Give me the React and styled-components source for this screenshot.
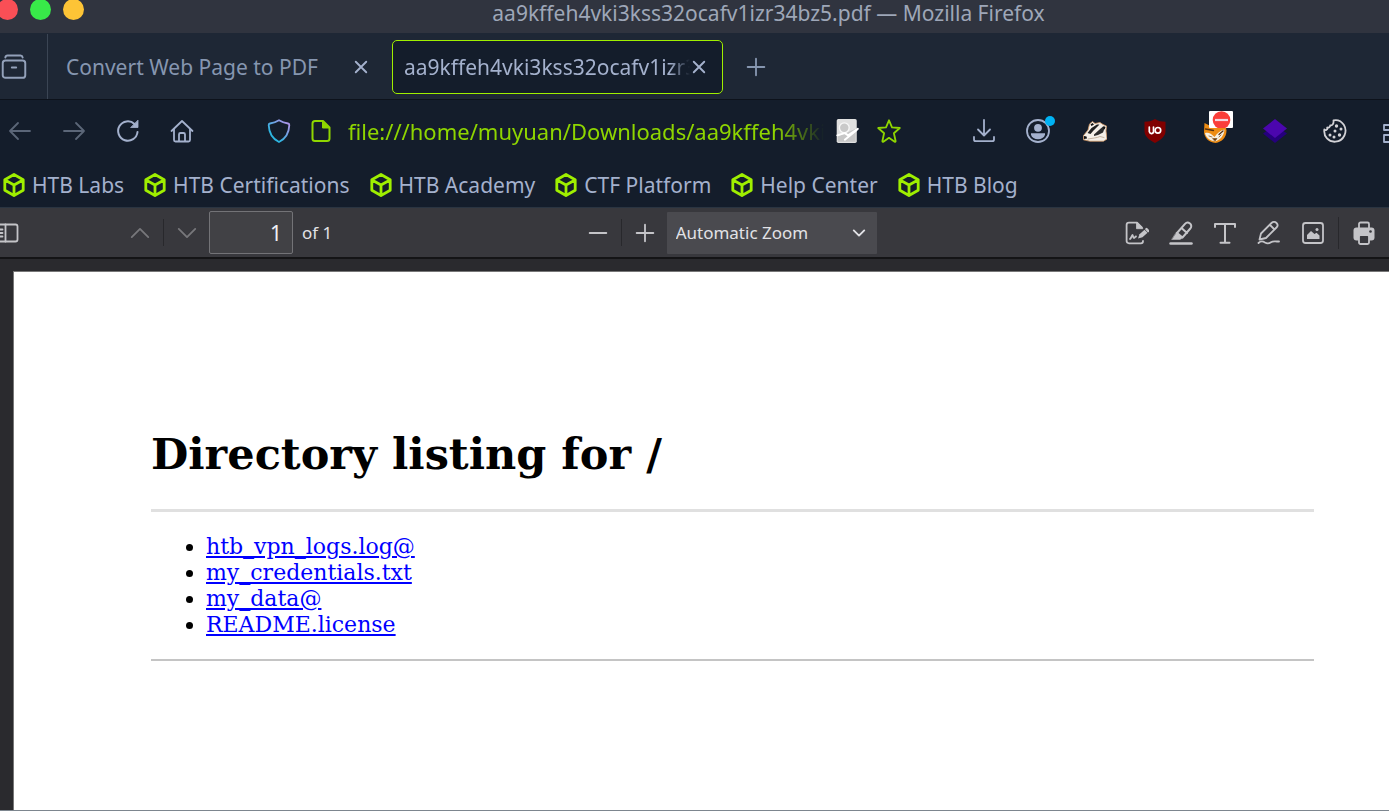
import React, { useState } from 'react';
import styled, { createGlobalStyle } from 'styled-components';

const bookmarks = ['HTB Labs', 'HTB Certifications', 'HTB Academy', 'CTF Platform', 'Help Center', 'HTB Blog'];
const files = ['htb_vpn_logs.log@', 'my_credentials.txt', 'my_data@', 'README.license'];
const fileName = 'aa9kffeh4vki3kss32ocafv1izr34bz5.pdf';

const Svg = ({ size = 24, children, ...rest }) => (
  <svg
    width={size}
    height={size}
    viewBox="0 0 24 24"
    fill="none"
    stroke="currentColor"
    strokeWidth="1.8"
    strokeLinecap="round"
    strokeLinejoin="round"
    aria-hidden="true"
    {...rest}
  >
    {children}
  </svg>
);

const TabsIcon = () => (
  <Svg size={26}>
    <path d="M4 3.2C4.3 1.7 5 1.4 6 1.4h12c1 0 1.700.3 2 1.800" />
    <rect x="1.600" y="6" width="20.800" height="16" rx="2.500" />
    <path d="M10 12.500h4" />
  </Svg>
);

const CloseIcon = () => (
  <Svg size={14}>
    <path d="M3 3l18 18M21 3L3 21" strokeWidth="3.200" />
  </Svg>
);

const PlusIcon = ({ size = 20 }) => (
  <Svg size={size} strokeWidth="2.200">
    <path d="M12 2v20M2 12h20" />
  </Svg>
);

const MinusIcon = () => (
  <Svg size={20} strokeWidth="2.200">
    <path d="M2 12h20" />
  </Svg>
);

const BackIcon = () => (
  <Svg>
    <path d="M22 12H2M10 4l-8 8 8 8" />
  </Svg>
);

const ForwardIcon = () => (
  <Svg>
    <path d="M2 12h20M14 4l8 8-8 8" />
  </Svg>
);

const ReloadIcon = () => (
  <Svg strokeWidth="2">
    <path d="M21.500 13A9.700 9.700 0 1 1 18.500 5" />
    <path d="M22 1.500V8.500H15z" fill="currentColor" strokeWidth="0.800" />
  </Svg>
);

const HomeIcon = () => (
  <Svg>
    <path d="M1.500 12L12 2l10.500 10" />
    <path d="M4 10.500V21c0 1 .6 1.500 1.500 1.500h13c.9 0 1.500-.5 1.500-1.500V10.500" />
    <path d="M9 22v-6.500c0-1 .6-1.500 1.500-1.500h3c.9 0 1.500.5 1.500 1.500V22" />
  </Svg>
);

const ShieldIcon = () => (
  <Svg stroke="url(#shield)">
    <defs>
      <linearGradient id="shield" x1="2" y1="22" x2="22" y2="2" gradientUnits="userSpaceOnUse">
        <stop offset="0.25" stopColor="#2cb5e0" />
        <stop offset="0.9" stopColor="#a994e8" />
      </linearGradient>
    </defs>
    <path d="M12 1.200c3 1.800 6 2.800 9 3.300 1 .2 1.300.7 1.300 1.600C22 14 19 19.500 12 23 5 19.500 2 14 1.700 6.100c0-.9.4-1.400 1.300-1.600 3-.5 6-1.500 9-3.300z" />
  </Svg>
);

const DocIcon = () => (
  <Svg>
    <path d="M14 2H6C4.500 2 3.500 3 3.500 4.500v15C3.500 21 4.500 22 6 22h12c1.500 0 2.500-1 2.500-2.500V8.500z" strokeWidth="2" />
    <path d="M13.500 2v7h7z" fill="currentColor" strokeWidth="1" />
  </Svg>
);

const TranslateIcon = () => (
  <Svg size={26} stroke="none">
    <rect x="2.500" y="1" width="18.500" height="22" rx="1.500" fill="#e0e0e0" />
    <path d="M3.500 17L20 10V22H3.500z" fill="#c7c7c7" />
    <circle cx="9.500" cy="9" r="4.500" fill="#c9c9c9" stroke="#f7f7f7" strokeWidth="1.200" />
    <path d="M3 16l7-2 3 2 9-6M10 20l11-9" stroke="#ffffff" strokeWidth="1.800" />
  </Svg>
);

const StarIcon = () => (
  <Svg>
    <path d="M12 1.300l3 7 7.800.7-5.900 5.200 1.700 7.800c.1.700-.4 1-1 .7L12 18.800l-5.600 3.900c-.6.300-1.100 0-1-.7l1.700-7.800L1.200 9l7.800-.7z" />
  </Svg>
);

const DownloadIcon = () => (
  <Svg>
    <path d="M12 1v15M6 10.500l6 6 6-6M2 18v2.500c0 1 .7 1.700 1.700 1.700h16.600c1 0 1.700-.7 1.700-1.700V18" />
  </Svg>
);

const AccountIcon = () => (
  <Svg>
    <circle cx="12" cy="12" r="11" />
    <circle cx="12" cy="8.800" r="3.900" fill="currentColor" stroke="none" />
    <path d="M5 14.200h14v1.500c-.8 2.800-3.600 4.500-7 4.500s-6.200-1.700-7-4.500z" fill="currentColor" stroke="none" />
  </Svg>
);

const BadgerIcon = () => (
  <Svg strokeWidth="0.800">
    <path d="M.5 20.500v-4L5 11 6.500 5l3-2.500L12 4.500l5-1L20 5.500l3.500 1.500L23 12l1 8-3.500 2.200H7z" fill="#f4efe8" stroke="#cf9765" />
    <path d="M4.500 14l4-5 5.500-3.500 2.500 0-6 6-3 3.500z" fill="#202020" stroke="none" />
    <path d="M11 15.500l5-4.500 4-3.500 1.500 2-1.500 4-5 2.500-4 1z" fill="#2b2b2b" stroke="none" />
    <path d="M7.500 5.500L9.500 4 11 5.500 8.500 7zM20.500 7l2 1-1 2.500-1.500-1.500z" fill="#111111" stroke="none" />
    <path d="M1 17l2.500.5.5 2-3 .5z" fill="#111111" stroke="none" />
    <path d="M5 20c4-.8 9-1 12-2.500l4 1" stroke="#b9a48e" />
  </Svg>
);

const UblockIcon = () => (
  <Svg stroke="none">
    <path d="M12 0c3 2.200 6.500 2.700 10.500 2.700v9.300c0 5.300-4.500 9-10.500 12C6 21 1.500 17.300 1.500 12V2.700C5.500 2.700 9 2.200 12 0z" fill="#800000" />
    <path d="M6.300 8v4.700a2.200 2.200 0 0 0 4.200.5V8v5.500" stroke="#ffffff" strokeWidth="1.700" />
    <circle cx="14.900" cy="11.300" r="2.800" stroke="#ffffff" strokeWidth="1.700" />
  </Svg>
);

const FoxIcon = () => (
  <Svg stroke="none">
    <path d="M1.500 4l5 2.500h11l4.500-3 1.500 8c0 7-4.500 11.500-11 12.500C5.500 23 1.500 19 1 13z" fill="#ee8c12" />
    <path d="M2 14c3-1 6 0 9.500 4 3-4 5.500-6.500 10-7.500-.5 6.500-4.500 10.500-9.500 12-5-1-9-3.500-10-8.500z" fill="#f6efe2" />
    <path d="M2.500 10l8 1.500M20 12l-4 3.500" stroke="#5a3310" strokeWidth="1.300" />
    <path d="M6 17l3 1M10 19.500h4l-2 2.500zM16 18l2-2" fill="#5a3310" stroke="#8b5b25" strokeWidth="0.800" />
  </Svg>
);

const BlockedIcon = () => (
  <svg width="24" height="17" viewBox="0 0 24 17" aria-hidden="true">
    <rect width="24" height="17" rx="1" fill="#ffffff" />
    <circle cx="12.500" cy="9" r="8.800" fill="#fa3e3a" />
    <path d="M6 9h13" stroke="#f3d7e0" strokeWidth="2.200" />
  </svg>
);

const LayersIcon = () => (
  <Svg stroke="none">
    <path d="M12 6L0 14.500 12 24l12-9.500z" fill="#25007c" />
    <path d="M12 0L0 9.500 12 19l12-9.500z" fill="#4b06ae" />
  </Svg>
);

const CookieIcon = () => (
  <Svg color="#d2d2d6">
    <path d="M10.500 1.300c4-.8 8 1 10.300 4.500C25 12.500 21 22 12.500 22.700 5.500 23.300.500 17.500 1.300 10.500c.5.500 1.500.7 2.200.2 1-.6 1-1.500.7-2.200 1.500.3 3-.5 3-2.200 1.500.5 3.800-1 3.300-5z" />
    <g fill="currentColor" stroke="none">
      <circle cx="13.500" cy="7" r="1.700" />
      <circle cx="18" cy="10" r="1.500" />
      <circle cx="12" cy="12" r="1.500" />
      <circle cx="7" cy="16" r="1.500" />
      <circle cx="16.500" cy="16" r="1.700" />
      <circle cx="11" cy="18" r="1.500" />
    </g>
  </Svg>
);

const ExtensionsIcon = () => (
  <Svg>
    <path d="M1 6h6v5H1zM1 16h8v7H1zM14 2h8v8h-8zM14 16h8v7h-8z" />
    <path d="M7 11v5" />
  </Svg>
);

const CubeIcon = () => (
  <Svg stroke="#9fef00" strokeWidth="2.800">
    <path d="M12 1.500l9.200 5.200v10.600L12 22.500l-9.200-5.200V6.700zM3 7l9 5 9-5M12 12v10" />
  </Svg>
);

const SidebarIcon = () => (
  <Svg>
    <rect x="-4" y="3.500" width="21.500" height="17" rx="2" />
    <path d="M5.500 3.500v17M-1 8.500h3.500M-1 12h3.500M-1 15.500h3.500" />
  </Svg>
);

const ChevronIcon = ({ up, size = 22 }) => (
  <Svg size={size} strokeWidth={size < 20 ? 3.2 : 2}>
    <path d={up ? 'M3 16.500l9-9 9 9' : 'M3 7.500l9 9 9-9'} />
  </Svg>
);

const SignatureIcon = () => (
  <Svg>
    <path d="M18 20c0 1.500-.7 2.300-2 2.300H4c-1.500 0-2.400-.8-2.400-2.300V4c0-1.500.9-2.300 2.400-2.300h8l5 5" />
    <path d="M11.500 1.500v6.200h6z" fill="currentColor" strokeWidth="0.800" />
    <path d="M5 18c1.500-1 2-4 2.500-4s.5 3 1.500 3 1-1.500 2-1.500" />
    <path d="M13 17.500l1.500-4.200 5-4.500 3 3-5 4.500z" fill="currentColor" stroke="none" />
    <path d="M21.500 8.200l1.800 1.800" strokeWidth="2.500" />
  </Svg>
);

const HighlightIcon = () => (
  <Svg>
    <path d="M8 12L16 2.800c1.500-1.700 3.500-1.500 5-.3s1.700 3.500.3 5L13.500 16.500zM12.500 7l5.500 5" strokeWidth="2" />
    <path d="M7.500 11.500l6 5.500-2.500 1.500H3z" fill="currentColor" strokeWidth="0.500" />
    <path d="M1.500 22.500h21" strokeWidth="2.500" />
  </Svg>
);

const TextIcon = () => (
  <Svg strokeWidth="2">
    <path d="M2 6V3h20v3M12 3v18.500M7.500 21.700h9" />
  </Svg>
);

const DrawIcon = () => (
  <Svg>
    <path d="M2.500 18.500l1.500-6L14.500 2c1.500-1.500 3.700-1.300 5 0s1.500 3 0 4.500L9 17zM13 4l4.500 4.500" />
    <path d="M1.500 22c3-3 5-1.500 6.500-.5 2 1.200 4 1 6-.3 2-1.200 3.500-.7 6-.7h2" />
  </Svg>
);

const ImageIcon = () => (
  <Svg>
    <rect x="2" y="2" width="20" height="20" rx="2.500" />
    <path d="M6 18v-4l4-4 3.500 3 2-1.200 3 2.700V18z" fill="currentColor" stroke="none" />
    <circle cx="16" cy="8.500" r="1.500" fill="currentColor" stroke="none" />
  </Svg>
);

const PrintIcon = () => (
  <Svg>
    <path d="M7 7V3c0-1 .7-1.500 1.500-1.500h7c.8 0 1.500.5 1.500 1.500v4" />
    <rect x="1.500" y="6.500" width="21" height="13" rx="3" fill="currentColor" stroke="none" />
    <rect x="7" y="14" width="10" height="9" rx="1.500" fill="#38383d" />
    <circle cx="18.500" cy="10.500" r="1.300" fill="#38383d" stroke="none" />
  </Svg>
);

const App = () => {
  const [page, setPage] = useState('1');
  const [url, setUrl] = useState(`file:///home/muyuan/Downloads/${fileName}`);

  return (
    <Window>
      <GlobalStyle />
      <TitleBar>
        <Lights>
          <Light $color="#f94f56" aria-label="Close window" />
          <Light $color="#38ea49" aria-label="Maximize window" />
          <Light $color="#fdc436" aria-label="Minimize window" />
        </Lights>
        <Title>{fileName} — Mozilla Firefox</Title>
      </TitleBar>

      <TabStrip>
        <TabsButton aria-label="Recent browsing">
          <TabsIcon />
        </TabsButton>
        <Tab>
          <TabLabel>Convert Web Page to PDF</TabLabel>
          <TabClose aria-label="Close tab"><CloseIcon /></TabClose>
        </Tab>
        <Tab $active>
          <TabLabel $faded>{fileName}</TabLabel>
          <TabClose aria-label="Close tab"><CloseIcon /></TabClose>
        </Tab>
        <NewTab aria-label="New tab"><PlusIcon /></NewTab>
      </TabStrip>

      <NavBar>
        <NavGroup>
          <NavButton $dim aria-label="Back"><BackIcon /></NavButton>
          <NavButton $dim aria-label="Forward"><ForwardIcon /></NavButton>
          <NavButton aria-label="Reload"><ReloadIcon /></NavButton>
          <NavButton aria-label="Home"><HomeIcon /></NavButton>
        </NavGroup>
        <UrlBar>
          <UrlButton aria-label="Tracking protection"><ShieldIcon /></UrlButton>
          <UrlButton aria-label="Site information"><DocIcon /></UrlButton>
          <UrlInput aria-label="Address" value={url} onChange={(e) => setUrl(e.target.value)} />
          <UrlButton aria-label="Translate"><TranslateIcon /></UrlButton>
          <UrlButton aria-label="Bookmark"><StarIcon /></UrlButton>
        </UrlBar>
        <ExtensionGroup>
          <NavButton aria-label="Downloads"><DownloadIcon /></NavButton>
          <NavButton aria-label="Account"><AccountIcon /><Dot /></NavButton>
          <NavButton $wide aria-label="Privacy Badger"><BadgerIcon /></NavButton>
          <NavButton $wide aria-label="uBlock"><UblockIcon /></NavButton>
          <NavButton $wide aria-label="Proxy"><FoxIcon /><Badge><BlockedIcon /></Badge></NavButton>
          <NavButton $wide aria-label="Wappalyzer"><LayersIcon /></NavButton>
          <NavButton $wide aria-label="Cookies"><CookieIcon /></NavButton>
          <NavButton $wide aria-label="Extensions"><ExtensionsIcon /></NavButton>
        </ExtensionGroup>
      </NavBar>

      <BookmarkBar>
        {bookmarks.map((name) => (
          <Bookmark key={name} href="#">
            <CubeIcon />
            {name}
          </Bookmark>
        ))}
      </BookmarkBar>

      <PdfToolbar>
        <PdfGroup>
          <SidebarButton aria-label="Toggle sidebar"><SidebarIcon /></SidebarButton>
          <PdfButton $dim aria-label="Previous page"><ChevronIcon up /></PdfButton>
          <Separator />
          <PdfButton $dim aria-label="Next page"><ChevronIcon /></PdfButton>
          <PageInput id="page" value={page} onChange={(e) => setPage(e.target.value)} />
          <PageLabel htmlFor="page">of 1</PageLabel>
        </PdfGroup>
        <PdfGroup>
          <PdfButton aria-label="Zoom out"><MinusIcon /></PdfButton>
          <Separator />
          <PdfButton aria-label="Zoom in"><PlusIcon /></PdfButton>
          <SelectWrap>
            <ZoomSelect aria-label="Zoom" defaultValue="auto">
              <option value="auto">Automatic Zoom</option>
            </ZoomSelect>
            <SelectArrow><ChevronIcon size={14} /></SelectArrow>
          </SelectWrap>
        </PdfGroup>
        <PdfGroup>
          <PdfButton aria-label="Add signature"><SignatureIcon /></PdfButton>
          <PdfButton aria-label="Highlight"><HighlightIcon /></PdfButton>
          <PdfButton aria-label="Text"><TextIcon /></PdfButton>
          <PdfButton aria-label="Draw"><DrawIcon /></PdfButton>
          <PdfButton aria-label="Add image"><ImageIcon /></PdfButton>
          <Separator $tall />
          <PrintButton aria-label="Print"><PrintIcon /></PrintButton>
        </PdfGroup>
      </PdfToolbar>

      <Viewer>
        <Page>
          <Heading>Directory listing for /</Heading>
          <Rule $thick />
          <FileList>
            {files.map((file) => (
              <li key={file}>
                <FileLink href="#">{file}</FileLink>
              </li>
            ))}
          </FileList>
          <Rule />
        </Page>
      </Viewer>
    </Window>
  );
};

const GlobalStyle = createGlobalStyle`
  * {
    box-sizing: border-box;
  }

  body {
    margin: 0;
    background: #2a2a2e;
    font-family: 'Noto Sans', sans-serif;
    font-size: 21px;
  }

  button {
    display: flex;
    align-items: center;
    justify-content: center;
    flex: none;
    padding: 0;
    border: none;
    background: none;
    color: inherit;
    font: inherit;
    cursor: pointer;
  }

  svg {
    display: block;
    flex: none;
  }
`;

const Window = styled.div`
  display: flex;
  flex-direction: column;
  min-height: 100vh;
  overflow: hidden;
  border-bottom: 1px solid #7d868f;
`;

const TitleBar = styled.header`
  display: flex;
  height: 33px;
  background: #30343f;
  color: #9ea7b8;
`;

const Lights = styled.div`
  display: flex;
  gap: 12px;
  margin: -1px 0 0 -3px;
`;

const Light = styled.button`
  width: 21px;
  height: 21px;
  border-radius: 50%;
  background: ${({ $color }) => $color};
`;

const Title = styled.div`
  flex: 1;
  padding-left: 64px;
  line-height: 26px;
  text-align: center;
  white-space: nowrap;
`;

const TabStrip = styled.div`
  display: flex;
  align-items: center;
  height: 67px;
  padding-top: 1px;
  background: #1e2735;
  border-bottom: 1px solid #0d121b;
  color: #8696b0;
`;

const TabsButton = styled.button`
  width: 48px;
  align-self: stretch;
  padding-right: 20px;
  border-right: 1px solid #3b4554;
  color: #93a1ba;
`;

const Tab = styled.div`
  display: flex;
  align-items: center;
  justify-content: space-between;
  width: ${({ $active }) => ($active ? '331px' : '344px')};
  height: 54px;
  padding: ${({ $active }) => ($active ? '0 14px 0 11px' : '0 22px 0 18px')};
  border: ${({ $active }) => ($active ? '1px solid #9fef00' : 'none')};
  border-radius: 5px;
  background: ${({ $active }) => ($active ? '#141d2b' : 'none')};
  color: ${({ $active }) => ($active ? '#a4b1cd' : 'inherit')};
`;

const TabLabel = styled.button`
  flex: 1;
  min-width: 0;
  justify-content: flex-start;
  overflow: hidden;
  white-space: nowrap;
  mask-image: ${({ $faded }) => ($faded ? 'linear-gradient(to left, transparent, #000 20px)' : 'none')};
`;

const TabClose = styled.button`
  width: 18px;
  height: 24px;
  color: #a4b1cd;
`;

const NewTab = styled.button`
  width: 66px;
  height: 54px;
`;

const NavBar = styled.nav`
  display: flex;
  align-items: center;
  height: 63px;
  padding-bottom: 2px;
  background: #141d2b;
  color: #a4b1cd;
`;

const NavGroup = styled.div`
  display: flex;
  flex: none;
  margin-left: -7px;
`;

const ExtensionGroup = styled(NavGroup)`
  margin: 0 -36px 0 0;
`;

const NavButton = styled.button`
  position: relative;
  width: ${({ $wide }) => ($wide ? '60px' : '54px')};
  height: 40px;
  color: ${({ $dim }) => ($dim ? '#5b6678' : 'inherit')};
`;

const Dot = styled.span`
  position: absolute;
  top: 5px;
  right: 10px;
  width: 10px;
  height: 10px;
  border-radius: 50%;
  background: #00b3f4;
`;

const Badge = styled.span`
  position: absolute;
  top: 0;
  right: 12px;
`;

const UrlBar = styled.div`
  display: flex;
  flex: 1;
  align-items: center;
  min-width: 0;
  padding: 0 47px 0 49px;
  color: #8fd600;
`;

const UrlButton = styled.button`
  width: 42px;
  height: 40px;
`;

const UrlInput = styled.input`
  flex: 1;
  min-width: 0;
  padding: 0 0 0 6px;
  border: none;
  outline: none;
  background: none;
  color: #8fd600;
  font: inherit;
  font-size: 22px;
  mask-image: linear-gradient(to left, transparent 2px, #000 52px);
`;

const BookmarkBar = styled.div`
  display: flex;
  gap: 19px;
  height: 44px;
  padding-left: 2px;
  background: #141d2b;
`;

const Bookmark = styled.a`
  display: flex;
  align-items: center;
  gap: 6px;
  color: #a4b1cd;
  text-decoration: none;
  white-space: nowrap;
`;

const PdfToolbar = styled.div`
  display: flex;
  justify-content: space-between;
  height: 52px;
  border-top: 1px solid #2a3441;
  border-bottom: 2px solid #141416;
  background: #38383d;
  color: #c4c4c8;
`;

const PdfGroup = styled.div`
  display: flex;
  align-items: center;
  flex: none;
`;

const PdfButton = styled.button`
  width: 44px;
  height: 42px;
  color: ${({ $dim }) => ($dim ? '#77777b' : 'inherit')};
`;

const SidebarButton = styled(PdfButton)`
  justify-content: flex-start;
  width: 118px;
`;

const PrintButton = styled(PdfButton)`
  width: 50px;
`;

const Separator = styled.span`
  width: 1px;
  height: ${({ $tall }) => ($tall ? '32px' : '27px')};
  margin: 0 ${({ $tall }) => ($tall ? '0' : '1px')} 0 ${({ $tall }) => ($tall ? '3px' : '1px')};
  background: #28282c;
`;

const PageInput = styled.input`
  width: 84px;
  height: 43px;
  padding: 0 10px;
  border: 1px solid #737377;
  border-radius: 2px;
  background: #414145;
  color: #f0f0f4;
  font: inherit;
  text-align: right;
`;

const PageLabel = styled.label`
  padding: 0 5px 0 9px;
  color: #e2e2e6;
  font-size: 17px;
`;

const SelectWrap = styled.div`
  position: relative;
`;

const ZoomSelect = styled.select`
  display: block;
  width: 210px;
  height: 42px;
  padding: 0 40px 0 9px;
  border: none;
  border-radius: 1px;
  appearance: none;
  background: #4a4a4f;
  color: #e2e2e6;
  font: inherit;
  font-size: 17px;
`;

const SelectArrow = styled.span`
  position: absolute;
  top: 14px;
  right: 11px;
  color: #e2e2e6;
  pointer-events: none;
`;

const Viewer = styled.main`
  display: flex;
  flex: 1;
  padding: 12px 0 0 13px;
  background: #2a2a2e;
`;

const Page = styled.article`
  flex: 1;
  padding: 154px 75px 0 137px;
  border-top: 1px solid #777777;
  border-left: 1px solid #777777;
  background: #ffffff;
  color: #000000;
  font-family: 'DejaVu Serif', serif;
`;

const Heading = styled.h1`
  margin: 0 0 27px;
  font-size: 43px;
  line-height: 56px;
`;

const Rule = styled.hr`
  height: ${({ $thick }) => ($thick ? '3px' : '2px')};
  margin: 0;
  border: none;
  background: ${({ $thick }) => ($thick ? '#e0e0e0' : '#c4c4c4')};
`;

const FileList = styled.ul`
  margin: 22px 0 21px;
  padding-left: 55px;
  font-size: 22px;
  line-height: 26px;
`;

const FileLink = styled.a`
  color: #0000ff;
`;

export default App;
